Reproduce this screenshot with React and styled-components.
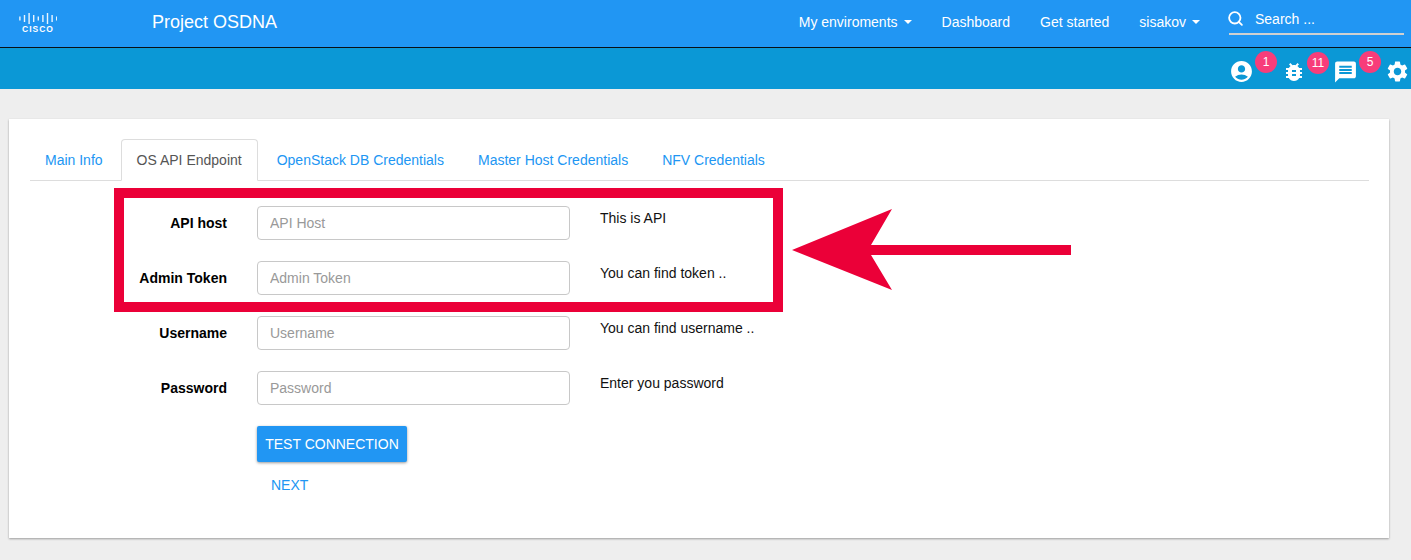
import React from "react"
import styled, { createGlobalStyle } from "styled-components"
import { MdAccountCircle, MdBugReport, MdMessage, MdSettings } from "react-icons/md"
import { Search } from "lucide-react"

const GlobalStyle = createGlobalStyle`
  html, body {
    margin: 0;
    padding: 0;
    background: #eeeeee;
    font-family: "Liberation Sans", Arial, sans-serif;
    font-size: 14px;
    color: #000;
  }
  * { box-sizing: border-box; }
`

const logoBars = [4, 7, 11, 7, 4, 7, 11, 7, 4]

const CiscoLogo = () => (
  <LogoWrap>
    <svg width="38" height="11" viewBox="0 0 38 11">
      {logoBars.map((h, i) => (
        <rect key={i} x={0.2 + i * 4.6} y={(11 - h) / 2} width="1.4" height={h} fill="#fff" opacity="0.9" />
      ))}
    </svg>
    <LogoText>CISCO</LogoText>
  </LogoWrap>
)

const rows = [
  { label: "API host", placeholder: "API Host", help: "This is API" },
  { label: "Admin Token", placeholder: "Admin Token", help: "You can find token .." },
  { label: "Username", placeholder: "Username", help: "You can find username .." },
  { label: "Password", placeholder: "Password", help: "Enter you password" },
]

const tabs = ["Main Info", "OS API Endpoint", "OpenStack DB Credentials", "Master Host Credentials", "NFV Credentials"]

const App = () => (
  <>
    <GlobalStyle />
    <Navbar>
      <CiscoLogo />
      <Brand>Project OSDNA</Brand>
      <NavItems>
        <NavLink>My enviroments<Caret /></NavLink>
        <NavLink>Dashboard</NavLink>
        <NavLink>Get started</NavLink>
        <NavLink>sisakov<Caret /></NavLink>
      </NavItems>
      <SearchBox>
        <SearchIcon size={17} color="#fff" strokeWidth={2.6} />
        <SearchText>Search ...</SearchText>
      </SearchBox>
    </Navbar>
    <Toolbar>
      <IconSlot>
        <MdAccountCircle size={25} />
        <Badge>1</Badge>
      </IconSlot>
      <IconSlot>
        <MdBugReport size={24} />
        <Badge>11</Badge>
      </IconSlot>
      <IconSlot>
        <MdMessage size={26} />
        <Badge>5</Badge>
      </IconSlot>
      <IconSlot>
        <MdSettings size={25} />
      </IconSlot>
    </Toolbar>
    <Page>
      <Card>
        <TabBar>
          {tabs.map((t, i) => (
            <Tab key={t} $active={i === 1}>{t}</Tab>
          ))}
        </TabBar>
        <Form>
          {rows.map((r) => (
            <Row key={r.label}>
              <Label>{r.label}</Label>
              <Input placeholder={r.placeholder} readOnly />
              <Help>{r.help}</Help>
            </Row>
          ))}
          <TestButton>TEST CONNECTION</TestButton>
          <NextLink>NEXT</NextLink>
          <Highlight />
          <Arrow width="280" height="84" viewBox="0 0 280 84">
            <polygon fill="#eb0038" points="0,41 100,0 79,36 279,36 279,46 79,46 100,81" />
          </Arrow>
        </Form>
      </Card>
    </Page>
  </>
)

export default App

const Navbar = styled.nav`
  display: flex;
  align-items: center;
  height: 48px;
  background: #2196f3;
  border-bottom: 1px solid #0a0f14;
  color: #fff;
  padding: 0 7px 0 19px;
`

const LogoWrap = styled.div`
  display: flex;
  flex-direction: column;
  align-items: center;
  width: 38px;
`

const LogoText = styled.span`
  font-size: 8.5px;
  font-weight: 700;
  letter-spacing: 1px;
  line-height: 9px;
  margin-top: 1px;
  color: #fff;
`

const Brand = styled.div`
  margin-left: 95px;
  font-size: 18px;
  line-height: 20px;
  margin-bottom: 3px;
`

const NavItems = styled.div`
  display: flex;
  align-items: center;
  gap: 30px;
  margin-left: auto;
  margin-bottom: 3px;
`

const NavLink = styled.a`
  display: flex;
  align-items: center;
  font-size: 14px;
  line-height: 20px;
  color: #fff;
`

const Caret = styled.span`
  width: 0;
  height: 0;
  margin-left: 6px;
  border-top: 4px solid #fff;
  border-left: 4px solid transparent;
  border-right: 4px solid transparent;
`

const SearchBox = styled.div`
  display: flex;
  align-items: center;
  gap: 11px;
  align-self: flex-start;
  width: 175px;
  height: 28px;
  margin-top: 7px;
  margin-left: 29px;
  padding-bottom: 3px;
  border-bottom: 2px solid #d0d0d0;
`

const SearchIcon = styled(Search)`
  margin-left: -2px;
`

const SearchText = styled.span`
  font-size: 14px;
  color: #fff;
`

const Toolbar = styled.div`
  display: flex;
  justify-content: flex-end;
  align-items: center;
  gap: 27px;
  height: 41px;
  padding: 6px 1px 0 0;
  background: #0b98d6;
  color: #fff;
`

const IconSlot = styled.div`
  position: relative;
  display: flex;
  width: 25px;
  justify-content: center;
`

const Badge = styled.span`
  position: absolute;
  left: 26px;
  top: -8px;
  width: 22px;
  height: 22px;
  border-radius: 50%;
  background: #f73d7a;
  color: #fff;
  font-size: 12px;
  line-height: 22px;
  text-align: center;
`

const Page = styled.div`
  padding: 30px 22px 22px 9px;
`

const Card = styled.section`
  height: 419px;
  padding: 20px 20px 0 21px;
  background: #fff;
  box-shadow: 0 1px 2px rgba(0, 0, 0, 0.35);
`

const TabBar = styled.div`
  display: flex;
  gap: 4px;
  height: 42px;
  border-bottom: 1px solid #dddddd;
`

const Tab = styled.a`
  height: 42px;
  margin-left: ${(p) => (p.$active ? "-0.7px" : "0")};
  padding: ${(p) => (p.$active ? "11px 15px 0 14.7px" : "11px 14px 0")};
  font-size: 14px;
  line-height: 18px;
  color: ${(p) => (p.$active ? "#555555" : "#2196f3")};
  background: ${(p) => (p.$active ? "#fff" : "transparent")};
  border: 1px solid ${(p) => (p.$active ? "#dddddd" : "transparent")};
  border-bottom-color: ${(p) => (p.$active ? "#fff" : "transparent")};
  border-radius: 4px 4px 0 0;
`

const Form = styled.div`
  position: relative;
  padding-top: 25px;
`

const Row = styled.div`
  display: flex;
  align-items: center;
  height: 34px;
  margin-bottom: 21px;
`

const Label = styled.label`
  width: 197px;
  margin-right: 30px;
  text-align: right;
  font-weight: 700;
  font-size: 14px;
`

const Input = styled.input`
  width: 313px;
  height: 34px;
  padding: 0 12px;
  border: 1px solid #c8c8c8;
  border-radius: 4px;
  font-family: inherit;
  font-size: 14px;
  outline: none;
  &::placeholder { color: #999999; }
`

const Help = styled.span`
  margin-left: 30px;
  margin-bottom: 10px;
  font-size: 14px;
  color: #111;
`

const TestButton = styled.button`
  display: block;
  width: 150px;
  height: 36px;
  margin-left: 227px;
  padding: 0;
  border: none;
  border-radius: 2px;
  background: #2196f3;
  color: #fff;
  font-family: inherit;
  font-size: 14px;
  box-shadow: 0 1px 3px rgba(0, 0, 0, 0.4);
`

const NextLink = styled.a`
  display: block;
  margin: 15px 0 0 241px;
  font-size: 14px;
  line-height: 16px;
  color: #2196f3;
`

const Highlight = styled.div`
  position: absolute;
  left: 84px;
  top: 7px;
  width: 669px;
  height: 124px;
  border: 10px solid #eb0038;
  pointer-events: none;
`

const Arrow = styled.svg`
  position: absolute;
  left: 762px;
  top: 28px;
`
